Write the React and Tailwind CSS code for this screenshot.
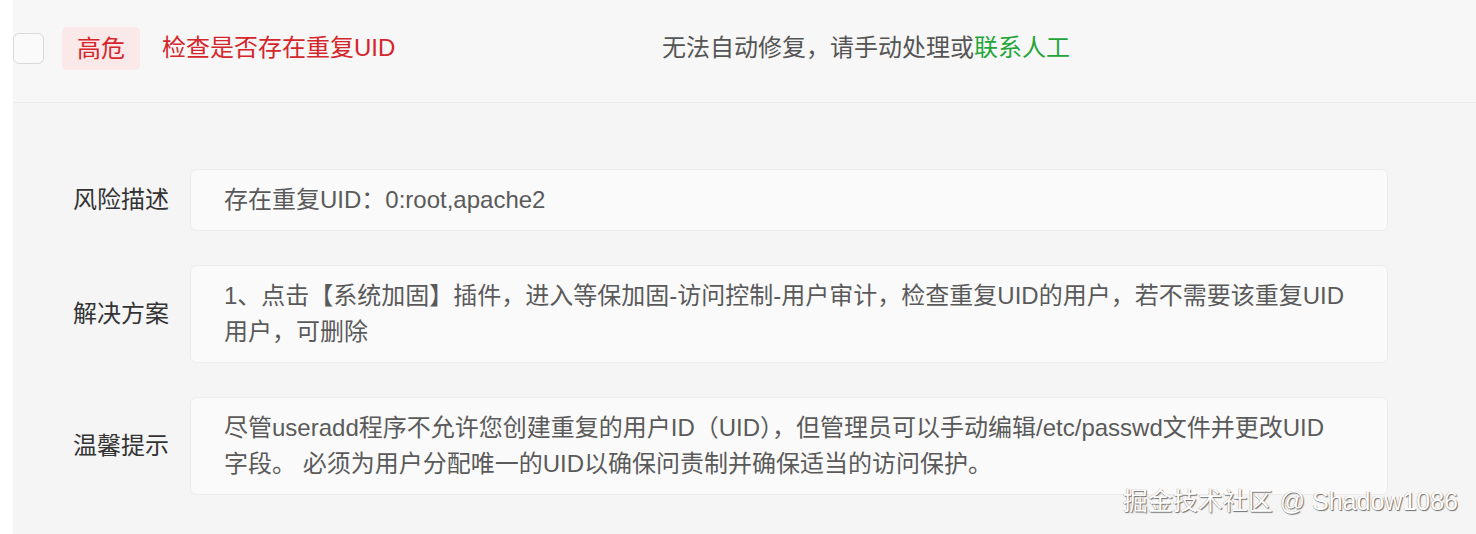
import React from "react";

const font = { fontFamily: '"Liberation Sans", "Noto Sans CJK SC", sans-serif' };

function Row({ label, children }) {
  return (
    <div className="flex items-center">
      <div className="w-[117px] shrink-0 text-[24px] leading-[36px] text-[#333333]">{label}</div>
      <div className="w-[1198px] rounded-[6px] border border-[#ececec] bg-[#fafafa] px-[33px] py-[12px] text-[24px] leading-[36px] text-[#5a5a5a]">
        {children}
      </div>
    </div>
  );
}

export default function App() {
  return (
    <div className="relative flex h-[534px] w-[1476px] bg-white" style={font}>
      <div className="w-[13px] shrink-0 bg-white" />
      <div className="flex flex-1 flex-col bg-[#f5f5f5]">
        <div className="flex h-[103px] items-center border-b border-[#ebebeb] bg-[#f7f7f7] pb-[6px]">
          <div className="h-[31px] w-[31px] rounded-[6px] border-[1.5px] border-[#dadada] bg-[#fafafa]" />
          <div className="ml-[18px] rounded-[5px] bg-[#fbe8e8] px-[15px] text-[24px] leading-[43px] text-[#d4262b]">高危</div>
          <div className="ml-[22px] w-[500px] text-[24px] leading-[36px] text-[#d4262b]">检查是否存在重复UID</div>
          <div className="text-[24px] leading-[36px] text-[#555555]">
            无法自动修复，请手动处理或<span className="text-[#23a53a]">联系人工</span>
          </div>
        </div>
        <div className="flex flex-col gap-[34px] pl-[60px] pt-[66px]">
          <Row label="风险描述">存在重复UID：0:root,apache2</Row>
          <Row label="解决方案">
            1、点击【系统加固】插件，进入等保加固-访问控制-用户审计，检查重复UID的用户，若不需要该重复UID
            <br />
            用户，可删除
          </Row>
          <Row label="温馨提示">
            尽管useradd程序不允许您创建重复的用户ID（UID），但管理员可以手动编辑/etc/passwd文件并更改UID
            <br />
            字段。 必须为用户分配唯一的UID以确保问责制并确保适当的访问保护。
          </Row>
        </div>
      </div>
      <div
        className="absolute bottom-[18px] right-[18px] text-[25px] leading-[30px] text-white"
        style={{ textShadow: "1px 1px 1px rgba(0,0,0,0.55), -0.5px -0.5px 0.5px rgba(0,0,0,0.35)" }}
      >
        掘金技术社区 @ Shadow1086
      </div>
    </div>
  );
}
